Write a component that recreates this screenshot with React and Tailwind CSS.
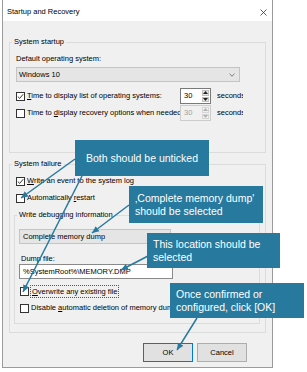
import React from 'react'

const Check = ({ checked }) => (
  <span className="w-[9px] h-[9px] border border-[#333333] bg-white flex items-center justify-center shrink-0">
    {checked && (
      <svg width="7" height="7" viewBox="0 0 7 7">
        <path d="M0.8 3.6 L2.7 5.4 L6.2 1.2" fill="none" stroke="#222222" strokeWidth="0.9" />
      </svg>
    )}
  </span>
)

const Chevron = () => (
  <svg width="6" height="4" viewBox="0 0 6 4">
    <path d="M0.5 0.8 L3 3.2 L5.5 0.8" fill="none" stroke="#606060" strokeWidth="0.8" />
  </svg>
)

const Spinner = ({ disabled }) => (
  <div
    className={
      disabled
        ? 'w-[31px] h-[16px] border border-[#cccccc] bg-[#f0f0f0] text-[#a0a0a0] flex'
        : 'w-[31px] h-[16px] border border-[#7a7a7a] bg-white text-black flex'
    }
  >
    <span className="flex-1 pl-[3px] leading-[14px]">30</span>
    <div className="w-[9px] flex flex-col gap-[1px] p-[1px]">
      <span className={disabled ? 'flex-1 flex items-center justify-center bg-[#f0f0f0] border border-[#d6d6d6]' : 'flex-1 flex items-center justify-center bg-[#e5e5e5] border border-[#c0c0c0]'}>
        <svg width="5" height="3" viewBox="0 0 5 3">
          <path d="M0 3 L2.5 0 L5 3 Z" fill={disabled ? '#b0b0b0' : '#222222'} />
        </svg>
      </span>
      <span className={disabled ? 'flex-1 flex items-center justify-center bg-[#f0f0f0] border border-[#d6d6d6]' : 'flex-1 flex items-center justify-center bg-[#e5e5e5] border border-[#c0c0c0]'}>
        <svg width="5" height="3" viewBox="0 0 5 3">
          <path d="M0 0 L2.5 3 L5 0 Z" fill={disabled ? '#b0b0b0' : '#222222'} />
        </svg>
      </span>
    </div>
  </div>
)

const App = () => {
  return (
    <div className="relative w-[307px] h-[372px] bg-white overflow-hidden font-['Liberation_Sans',Arial,sans-serif] text-[7.5px] text-black">
      {/* Dialog */}
      <div className="ml-[2px] w-[271px] h-[368px] border-x border-b border-[#9b9b9b] flex flex-col">
        <div className="h-[21px] pt-[3px] pl-[4px] pr-[5px] bg-white flex items-center justify-between">
          <span>Startup and Recovery</span>
          <svg width="7" height="7" viewBox="0 0 7 7">
            <path d="M0.5 0.5 L6.5 6.5 M6.5 0.5 L0.5 6.5" stroke="#333333" strokeWidth="0.8" />
          </svg>
        </div>

        <div className="flex-1 bg-[#f0f0f0] px-[6px] pt-[16px]">
          {/* System startup */}
          <fieldset className="w-[257px] h-[116px] border border-[#dcdcdc]">
            <legend className="ml-[2px] px-[2px] leading-[10px]">System startup</legend>
            <div className="mt-[7px] ml-[6px] leading-[10px]">Default operating system:</div>
            <div className="mt-[3px] ml-[6px] w-[224px] h-[15px] border border-[#c4c4c4] bg-[#e5e5e5] flex items-center justify-between pl-[2px] pr-[4px]">
              <span>Windows 10</span>
              <Chevron />
            </div>
            <div className="mt-[6px] ml-[6px] h-[16px] flex items-center">
              <div className="w-[164px] flex items-center gap-[2px] overflow-hidden whitespace-nowrap">
                <Check checked />
                <span><u>T</u>ime to display list of operating systems:</span>
              </div>
              <Spinner />
              <span className="ml-[6px] w-[26px] overflow-hidden whitespace-nowrap">seconds</span>
            </div>
            <div className="mt-[1px] ml-[6px] h-[16px] flex items-center">
              <div className="w-[164px] flex items-center gap-[2px] overflow-hidden whitespace-nowrap">
                <Check />
                <span>Time to <u>d</u>isplay recovery options when needed:</span>
              </div>
              <Spinner disabled />
              <span className="ml-[6px] w-[26px] overflow-hidden whitespace-nowrap">seconds</span>
            </div>
          </fieldset>

          {/* System failure */}
          <fieldset className="mt-[6px] w-[257px] h-[174px] border border-[#dcdcdc]">
            <legend className="ml-[2px] px-[2px] leading-[10px]">System failure</legend>
            <div className="mt-[7px] ml-[6px] h-[10px] flex items-center gap-[2px]">
              <Check checked />
              <span><u>W</u>rite an event to the system log</span>
            </div>
            <div className="mt-[7px] ml-[6px] h-[10px] flex items-center gap-[2px]">
              <Check />
              <span>Automatically <u>r</u>estart</span>
            </div>

            <fieldset className="mt-[7px] ml-[4px] w-[245px] h-[114px] border border-[#dcdcdc]">
              <legend className="ml-[2px] px-[2px] leading-[10px]">Write debugging information</legend>
              <div className="mt-[9px] ml-[4px] w-[152px] h-[15px] border border-[#c4c4c4] bg-[#e5e5e5] flex items-center justify-between pl-[3px] pr-[4px]">
                <span>Complete memory dump</span>
                <Chevron />
              </div>
              <div className="mt-[10px] ml-[6px] leading-[10px]">Dump file:</div>
              <div className="ml-[4px] w-[154px] h-[15px] border border-[#8a8a8a] bg-white flex items-center pl-[3px]">
                %SystemRoot%\MEMORY.DMP
              </div>
              <div className="mt-[7px] ml-[5px] h-[10px] flex items-center gap-[1px]">
                <Check />
                <span className="border border-dotted border-[#555555] px-[1px] leading-[11px]"><u>O</u>verwrite any existing file</span>
              </div>
              <div className="mt-[7px] ml-[5px] h-[10px] flex items-center gap-[2px] whitespace-nowrap">
                <Check />
                <span>Disable <u>a</u>utomatic deletion of memory dumps when disk space is low</span>
              </div>
            </fieldset>
          </fieldset>

          {/* Buttons */}
          <div className="mt-[10px] pr-[19px] flex justify-end gap-[4px]">
            <button className="w-[50px] h-[19px] border border-[#0078d7] bg-[#e1e1e1] text-[7.5px]">OK</button>
            <button className="w-[50px] h-[19px] border border-[#adadad] bg-[#e1e1e1] text-[7.5px]">Cancel</button>
          </div>
        </div>
      </div>

      {/* Arrows */}
      <svg className="absolute left-0 top-0 pointer-events-none" width="307" height="372" viewBox="0 0 307 372">
        <defs>
          <marker id="head" markerUnits="userSpaceOnUse" markerWidth="8" markerHeight="8" refX="7" refY="4" orient="auto">
            <path d="M0 0.8 L7 4 L0 7.2 Z" fill="#277a9e" />
          </marker>
        </defs>
        <g stroke="#277a9e" strokeWidth="1.5" fill="none" markerEnd="url(#head)">
          <line x1="75" y1="159" x2="21" y2="198" />
          <line x1="82" y1="176" x2="23" y2="292" />
          <line x1="129" y1="205" x2="92" y2="233" />
          <line x1="148" y1="256" x2="121" y2="270" />
          <line x1="197" y1="318" x2="177" y2="350" />
        </g>
      </svg>

      {/* Callouts */}
      <div className="absolute left-[75px] top-[140px] w-[134px] h-[36px] bg-[#277a9e] text-white text-[10.5px] leading-[13px] flex items-center justify-center">
        Both should be unticked
      </div>
      <div className="absolute left-[129px] top-[186px] w-[134px] h-[37px] bg-[#277a9e] text-white text-[10.5px] leading-[13px] flex flex-col justify-center pl-[6px]">
        <span>‚Complete memory dump'</span>
        <span>should be selected</span>
      </div>
      <div className="absolute left-[147px] top-[233px] w-[133px] h-[35px] bg-[#277a9e] text-white text-[10.5px] leading-[13px] flex flex-col justify-center pl-[6px]">
        <span>This location should be</span>
        <span>selected</span>
      </div>
      <div className="absolute left-[170px] top-[283px] w-[134px] h-[35px] bg-[#277a9e] text-white text-[10.5px] leading-[13px] flex flex-col justify-center pl-[6px]">
        <span>Once confirmed or</span>
        <span>configured, click [OK]</span>
      </div>
    </div>
  )
}

export default App
